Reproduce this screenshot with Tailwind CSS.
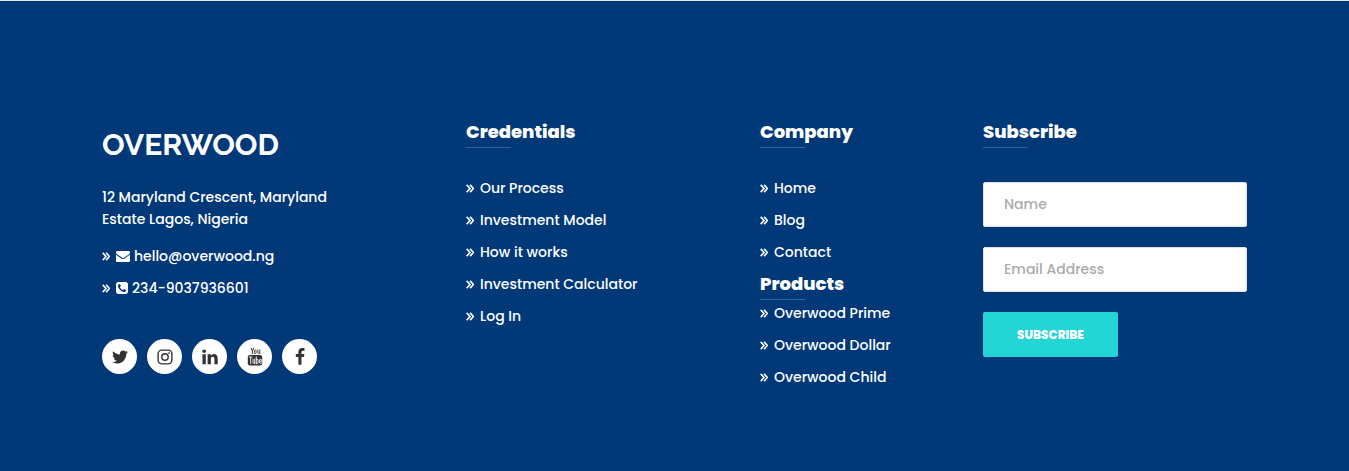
<!DOCTYPE html>
<html lang="en">
<head>
<meta charset="utf-8">
<meta name="viewport" content="width=device-width, initial-scale=1">
<title>Overwood</title>
<script src="https://cdn.jsdelivr.net/npm/@tailwindcss/browser@4"></script>
</head>
<body class="bg-[#003878]">
<svg class="hidden" aria-hidden="true">
  <symbol id="chev" viewBox="0 0 8 9"><path d="M.7 .9 4 4.500 .7 8.100M4.100 .9 7.400 4.500 4.100 8.100" fill="none" stroke="currentColor" stroke-width="1.600"/></symbol>
</svg>
<footer class="min-h-screen border-t border-[#dfe8f0] bg-[#003878] px-6 pt-[119px] pb-20 font-['Poppins','Inter',sans-serif] text-[14px] leading-[22px] font-medium text-white">
  <div class="mx-auto grid max-w-[1145px] grid-cols-1 gap-y-10 md:grid-cols-[364fr_294fr_223fr_264fr]">
    <section>
      <h2 class="pt-[5px] font-['Raleway','Lato',sans-serif] text-[30px] leading-[40px] font-bold">OVERWOOD</h2>
      <p class="mt-[21px] max-w-[250px]">12 Maryland Crescent, Maryland Estate Lagos, Nigeria</p>
      <ul class="mt-[15px] space-y-[10px]">
        <li><a href="#" class="flex items-center"><svg class="mr-[6px] h-[9px] w-2"><use href="#chev"/></svg><svg class="mr-1 size-[14px]" viewBox="0 0 1792 1792" fill="currentColor"><path d="M1792 710v794q0 66-47 113t-113 47h-1472q-66 0-113-47t-47-113v-794q44 49 101 87 362 246 497 345 57 42 92.500 65.500t94.500 48 110 24.500h2q51 0 110-24.500t94.500-48 92.500-65.500q170-123 498-345 57-39 100-87zm0-294q0 79-49 151t-122 123q-376 261-468 325-10 7-42.500 31t-54 38.500-52 32.500-57.500 27-50 9h-2q-23 0-50-9t-57.500-27-52-32.500-54-38.500-42.500-31q-91-64-262-182.500t-205-142.500q-62-42-117-115.500t-55-136.500q0-78 41.500-130t118.500-52h1472q65 0 112.500 47t47.500 113z"/></svg>hello@overwood.ng</a></li>
        <li><a href="#" class="flex items-center"><svg class="mr-[6px] h-[9px] w-2"><use href="#chev"/></svg><svg class="mr-1 size-3" viewBox="0 128 1536 1536" fill="currentColor"><path d="M1280 1193q0-11-2-16-3-8-38.500-29.500t-88.500-49.500l-53-29q-5-3-19-13t-25-15-21-5q-18 0-47 32.500t-57 65.500-44 33q-7 0-16.500-3.500t-15.500-6.500-17-9.500-14-8.500q-99-55-170.500-126.500t-126.500-170.500q-2-3-8.500-14t-9.500-17-6.500-15.500-3.500-16.500q0-13 20.500-33.500t45-38.500 45-39.500 20.500-36.500q0-10-5-21t-15-25-13-19q-3-6-15-28.500t-25-45.500-26.500-47.500-25-40.500-16.500-18-16-2q-48 0-101 22-46 21-80 94.500t-34 130.500q0 16 2.500 34t5 30.500 9 33 10 29.500 12.500 33 11 30q60 164 216.500 320.500t320.500 216.500q6 2 30 11t33 12.500 29.500 10 33 9 30.500 5 34 2.500q57 0 130.500-34t94.500-80q22-53 22-101zm256-777v960q0 119-84.500 203.500t-203.500 84.500h-960q-119 0-203.500-84.500t-84.500-203.500v-960q0-119 84.500-203.500t203.500-84.500h960q119 0 203.500 84.500t84.500 203.500z"/></svg>234-9037936601</a></li>
      </ul>
      <div class="mt-10 flex gap-[10px] text-[#333]">
        <a href="#" aria-label="Twitter" class="flex size-[35px] items-center justify-center rounded-full bg-white"><svg class="size-[18px]" viewBox="0 0 1792 1792" fill="currentColor"><path d="M1684 408q-67 98-162 167 1 14 1 42 0 130-38 259.500t-115.500 248.500-184.500 210.500-258 146-323 54.500q-271 0-496-145 35 4 78 4 225 0 401-138-105-2-188-64.500t-114-159.500q33 5 61 5 43 0 85-11-112-23-185.500-111.500t-73.500-205.500v-4q68 38 146 41-66-44-105-115t-39-154q0-88 44-163 121 149 294.500 238.500t371.500 99.500q-8-38-8-74 0-134 94.500-228.500t228.500-94.500q140 0 236 102 109-21 205-78-37 115-142 178 93-10 186-50z"/></svg></a>
        <a href="#" aria-label="Instagram" class="flex size-[35px] items-center justify-center rounded-full bg-white"><svg class="size-4" viewBox="0 0 16 16" fill="none" stroke="currentColor" stroke-width="1.400"><rect x="1.100" y="1.100" width="13.800" height="13.800" rx="3.800"/><circle cx="8" cy="8" r="3.200"/><circle cx="12" cy="4.100" r=".9" fill="currentColor" stroke="none"/></svg></a>
        <a href="#" aria-label="LinkedIn" class="flex size-[35px] items-center justify-center rounded-full bg-white"><svg class="size-[18px]" viewBox="0 0 1792 1792" fill="currentColor"><path d="M477 625v991h-330v-991h330zm21-306q1 73-50.500 122t-135.500 49h-2q-82 0-132-49t-50-122q0-74 51.500-122.500t134.500-48.500 133 48.500 51 122.500zm1166 729v568h-329v-530q0-105-40.500-164.500t-126.500-59.500q-63 0-105.500 34.500t-63.500 85.500q-11 30-11 81v553h-329q2-399 2-647t-1-296l-1-48h329v144h-2q20-32 41-56t56.500-52 87-43.500 114.500-15.500q171 0 275 113.500t104 332.500z"/></svg></a>
        <a href="#" aria-label="YouTube" class="flex size-[35px] items-center justify-center rounded-full bg-white"><svg class="h-[19px] w-4" viewBox="0 0 16 19" fill="none" stroke="currentColor"><path d="M4 .8 5.400 4v3M6.800 .8 5.400 4" stroke-width="1"/><rect x="7.400" y="2.900" width="1.700" height="3.700" rx=".8" stroke-width=".9"/><path d="M10.900 2.500v3.600q0 .9 1.800-.2M12.800 2.500v4.500" stroke-width=".9"/><rect x=".8" y="8" width="14.400" height="10.500" rx="2.200" fill="currentColor" stroke="none"/><g stroke="#fff" stroke-width=".9"><path d="M2 10h3.400M3.700 10v7M6 11.700v4q0 1.100 1.700 0M7.800 11.700V17M9.300 9.500V17M9.300 12.600q1.800-.8 1.800.6v2.300q0 1.600-1.800.6M12.500 14.300h1.900v-1.200q0-1-.9-1t-1 1v2.400q0 1 1 1t.9-1.200"/></g></svg></a>
        <a href="#" aria-label="Facebook" class="flex size-[35px] items-center justify-center rounded-full bg-white"><svg class="size-[18px]" viewBox="0 0 1792 1792" fill="currentColor"><path d="M1343 12v264h-157q-86 0-116 36t-30 108v189h293l-39 296h-254v759h-306v-759h-255v-296h255v-218q0-186 104-288.500t277-102.500q147 0 228 12z"/></svg></a>
      </div>
    </section>

    <section>
      <h3 class="text-[18px] leading-6 font-extrabold">Credentials</h3>
      <div class="mt-[3px] h-px w-[45px] bg-[#33609a]"></div>
      <ul class="mt-[29px] space-y-[10px]">
        <li><a href="#" class="flex items-center gap-[6px]"><svg class="h-[9px] w-2"><use href="#chev"/></svg>Our Process</a></li>
        <li><a href="#" class="flex items-center gap-[6px]"><svg class="h-[9px] w-2"><use href="#chev"/></svg>Investment Model</a></li>
        <li><a href="#" class="flex items-center gap-[6px]"><svg class="h-[9px] w-2"><use href="#chev"/></svg>How it works</a></li>
        <li><a href="#" class="flex items-center gap-[6px]"><svg class="h-[9px] w-2"><use href="#chev"/></svg>Investment Calculator</a></li>
        <li><a href="#" class="flex items-center gap-[6px]"><svg class="h-[9px] w-2"><use href="#chev"/></svg>Log In</a></li>
      </ul>
    </section>

    <section>
      <h3 class="text-[18px] leading-6 font-extrabold">Company</h3>
      <div class="mt-[3px] h-px w-[45px] bg-[#33609a]"></div>
      <ul class="mt-[29px] space-y-[10px]">
        <li><a href="#" class="flex items-center gap-[6px]"><svg class="h-[9px] w-2"><use href="#chev"/></svg>Home</a></li>
        <li><a href="#" class="flex items-center gap-[6px]"><svg class="h-[9px] w-2"><use href="#chev"/></svg>Blog</a></li>
        <li><a href="#" class="flex items-center gap-[6px]"><svg class="h-[9px] w-2"><use href="#chev"/></svg>Contact</a></li>
      </ul>
      <h3 class="mt-[9px] text-[18px] leading-6 font-extrabold">Products</h3>
      <div class="mt-[3px] h-px w-[45px] bg-[#33609a]"></div>
      <ul class="mt-[2px] space-y-[10px]">
        <li><a href="#" class="flex items-center gap-[6px]"><svg class="h-[9px] w-2"><use href="#chev"/></svg>Overwood Prime</a></li>
        <li><a href="#" class="flex items-center gap-[6px]"><svg class="h-[9px] w-2"><use href="#chev"/></svg>Overwood Dollar</a></li>
        <li><a href="#" class="flex items-center gap-[6px]"><svg class="h-[9px] w-2"><use href="#chev"/></svg>Overwood Child</a></li>
      </ul>
    </section>

    <section>
      <h3 class="text-[18px] leading-6 font-extrabold">Subscribe</h3>
      <div class="mt-[3px] h-px w-[45px] bg-[#33609a]"></div>
      <form class="mt-[34px] flex flex-col items-start gap-5">
        <input type="text" aria-label="Name" placeholder="Name" class="h-[45px] w-full rounded-xs border border-[#e1e1e1] bg-white px-5 text-[14px] text-[#333] placeholder:text-[#aaa]">
        <input type="email" aria-label="Email Address" placeholder="Email Address" class="h-[45px] w-full rounded-xs border border-[#e1e1e1] bg-white px-5 text-[14px] text-[#333] placeholder:text-[#aaa]">
        <button type="button" class="h-[45px] w-[135px] rounded-xs bg-[#24d5d5] text-[12px] font-extrabold text-white">SUBSCRIBE</button>
      </form>
    </section>
  </div>
</footer>
</body>
</html>
